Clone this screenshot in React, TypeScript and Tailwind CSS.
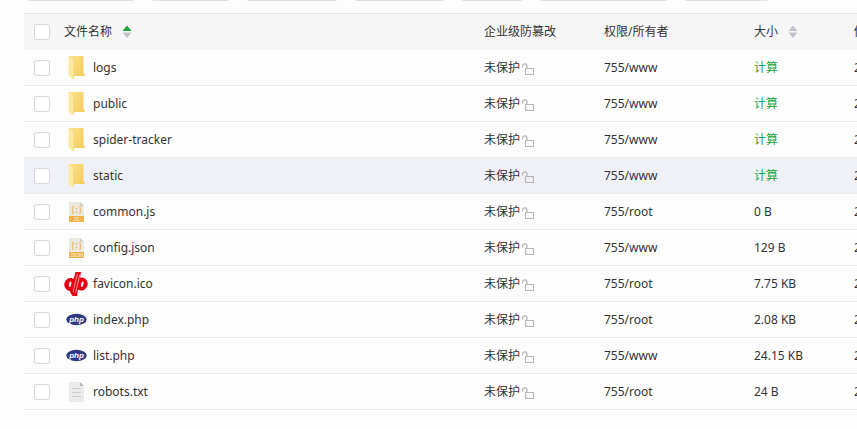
import { ReactNode } from 'react';

type FileKind = 'folder' | 'js' | 'json' | 'ico' | 'php' | 'txt';

type FileRow = {
  name: string;
  kind: FileKind;
  owner: string;
  size?: string;
  active?: boolean;
};

const FILES: FileRow[] = [
  { name: 'logs', kind: 'folder', owner: '755/www' },
  { name: 'public', kind: 'folder', owner: '755/www' },
  { name: 'spider-tracker', kind: 'folder', owner: '755/www' },
  { name: 'static', kind: 'folder', owner: '755/www', active: true },
  { name: 'common.js', kind: 'js', owner: '755/root', size: '0 B' },
  { name: 'config.json', kind: 'json', owner: '755/www', size: '129 B' },
  { name: 'favicon.ico', kind: 'ico', owner: '755/root', size: '7.75 KB' },
  { name: 'index.php', kind: 'php', owner: '755/root', size: '2.08 KB' },
  { name: 'list.php', kind: 'php', owner: '755/www', size: '24.15 KB' },
  { name: 'robots.txt', kind: 'txt', owner: '755/root', size: '24 B' },
];

const TOOLBAR = ['w-[110px]', 'w-[81px]', 'w-[94px]', 'w-[93px]', 'w-[64px]', 'w-[131px]', 'w-[87px]'];

function FolderIcon() {
  return (
    <svg width="24" height="24" viewBox="0 0 24 24" aria-hidden="true">
      <defs>
        <linearGradient id="folder-back" x1="0" y1="0" x2="1" y2="1">
          <stop offset="0" stopColor="#fbe08a" />
          <stop offset="1" stopColor="#f3cb5c" />
        </linearGradient>
      </defs>
      <path d="M5 0H19.5V17.5H20.5V20H5Z" fill="url(#folder-back)" />
      <path d="M4.5 0L9.5 3.5V23.5L4.5 20Z" fill="#fde9a6" />
      <path d="M9.5 4V23" stroke="#f8dc85" strokeWidth="1" />
    </svg>
  );
}

function CodeIcon({ label }: { label: string }) {
  return (
    <svg width="24" height="24" viewBox="0 0 24 24" aria-hidden="true">
      <path d="M5 2H16L20 6V16H5Z" fill="#e9e9df" />
      <path d="M16 2L20 6H16Z" fill="#cfcfc6" />
      <path d="M5 16H20V22H5Z" fill="#f0b04c" />
      <g fill="none" stroke="#f2bd6e" strokeWidth="1.2">
        <path d="M10 6.5H9.5Q8.7 6.5 8.7 7.5V9Q8.7 10 7.5 10Q8.7 10 8.7 11V12.5Q8.7 13.5 9.5 13.5H10" />
        <path d="M15 6.5H15.5Q16.3 6.5 16.3 7.5V9Q16.3 10 17.5 10Q16.3 10 16.3 11V12.5Q16.3 13.5 15.5 13.5H15" />
      </g>
      <path d="M12 7.5H13V9H12ZM12 11H13V12.5H12Z" fill="#f0b457" />
      <text x="12.5" y="21" textAnchor="middle" fontSize="5" fill="#fdf3df" fontFamily="Liberation Sans, sans-serif">
        {label}
      </text>
    </svg>
  );
}

function DpIcon() {
  return (
    <svg width="24" height="24" viewBox="0 0 24 24" aria-hidden="true">
      <g fill="#e60012">
        <ellipse cx="6.5" cy="12.5" rx="6.2" ry="6.5" transform="rotate(10 6.5 12.5)" />
        <ellipse cx="17.5" cy="12" rx="6.2" ry="6.5" transform="rotate(10 17.5 12)" />
        <path d="M11.5 0H17L13 24H8.5L6 20Z" />
      </g>
      <g fill="none" stroke="#fdfdfd">
        <path d="M6.5 10.5L5.8 14" strokeWidth="2" strokeLinecap="round" />
        <path d="M18.6 10.5L17.9 14" strokeWidth="2" strokeLinecap="round" />
        <path d="M13.5 2L9 20" strokeWidth="0.6" />
        <path d="M15.8 3L11.5 21" strokeWidth="0.6" />
      </g>
    </svg>
  );
}

function PhpIcon() {
  return (
    <svg width="24" height="24" viewBox="0 0 24 24" aria-hidden="true">
      <ellipse cx="12.5" cy="11.5" rx="10.2" ry="5.7" fill="#2f3a80" />
      <text
        x="12.5"
        y="14"
        textAnchor="middle"
        fontSize="8"
        fontWeight="bold"
        fontStyle="italic"
        fill="#ffffff"
        fontFamily="Liberation Sans, sans-serif"
      >
        php
      </text>
    </svg>
  );
}

function TextIcon() {
  return (
    <svg width="24" height="24" viewBox="0 0 24 24" aria-hidden="true">
      <path d="M5 2H16L20 6V22H5Z" fill="#ebebeb" />
      <path d="M16 2L20 6H16Z" fill="#b8b8b8" />
      <path d="M8 8.5H17M8 12.5H17M8 16.5H17" stroke="#cfcfcf" />
    </svg>
  );
}

function FileIcon({ kind }: { kind: FileKind }) {
  if (kind === 'folder') return <FolderIcon />;
  if (kind === 'js') return <CodeIcon label="JS" />;
  if (kind === 'json') return <CodeIcon label="JSON" />;
  if (kind === 'ico') return <DpIcon />;
  if (kind === 'php') return <PhpIcon />;
  return <TextIcon />;
}

function UnlockIcon() {
  return (
    <svg width="14" height="14" viewBox="0 0 14 14" fill="none" stroke="#b5b5b5" strokeWidth="1.2" aria-hidden="true">
      <rect x="5.5" y="6.5" width="8" height="6" rx="0.6" />
      <path d="M2.5 5.5V4Q2.5 1.8 4.8 1.8Q7 1.8 7 4V6.5" />
    </svg>
  );
}

function SortIcon({ asc }: { asc?: boolean }) {
  return (
    <svg width="10" height="14" viewBox="0 0 10 14" aria-hidden="true">
      <path d="M5 0.5L9.5 6H0.5Z" fill={asc ? '#20a53a' : '#c0c4cc'} />
      <path d="M5 13L9.5 7.5H0.5Z" fill="#c0c4cc" />
    </svg>
  );
}

function Checkbox({ label }: { label: string }) {
  return (
    <input
      type="checkbox"
      aria-label={label}
      className="block size-4 appearance-none rounded-xs border border-[#d6d7e0] bg-white checked:bg-[#20a53a]"
    />
  );
}

function Th({ children }: { children: ReactNode }) {
  return <th className="px-2.5 text-left font-normal whitespace-nowrap">{children}</th>;
}

export default function App() {
  return (
    <main className="min-h-screen overflow-hidden bg-[#fdfdfd] pl-6 font-['Noto_Sans','Noto_Sans_CJK_SC',sans-serif] text-xs text-[#333]">
      {/* bottom edge of the toolbar buttons scrolled out above the list */}
      <div className="mb-3 flex h-px items-end gap-3.5 overflow-hidden pl-0.5" aria-hidden="true">
        {TOOLBAR.map((width, i) => (
          <span key={i} className={`h-8 shrink-0 rounded border border-[#dcdfe6] ${width}`} />
        ))}
      </div>

      <table className="w-full min-w-[960px] table-fixed border-separate border-spacing-0">
        <colgroup>
          <col className="w-[30px]" />
          <col />
          <col className="w-[120px]" />
          <col className="w-[150px]" />
          <col className="w-[100px]" />
          <col className="w-[140px]" />
        </colgroup>
        <thead>
          <tr className="h-[37px] bg-[#f6f6f6] *:border-t *:border-[#e6e6e6]">
            <th className="pl-2.5">
              <Checkbox label="全选" />
            </th>
            <Th>
              <button type="button" className="flex items-center gap-2.5">
                文件名称
                <SortIcon asc />
              </button>
            </Th>
            <Th>企业级防篡改</Th>
            <Th>权限/所有者</Th>
            <Th>
              <button type="button" className="flex items-center gap-2.5">
                大小
                <SortIcon />
              </button>
            </Th>
            <Th>修</Th>
          </tr>
        </thead>
        <tbody>
          {FILES.map((file) => (
            <tr
              key={file.name}
              className={`h-9 *:border-b *:border-[#ebebeb] hover:bg-[#f0f1f6] ${file.active ? 'bg-[#f0f1f6]' : ''}`}
            >
              <td className="pl-2.5">
                <Checkbox label={file.name} />
              </td>
              <td className="px-2.5">
                <a href="#" className="flex items-center gap-[5px]">
                  <FileIcon kind={file.kind} />
                  {file.name}
                </a>
              </td>
              <td className="px-2.5">
                <span className="flex items-end">
                  未保护
                  <UnlockIcon />
                </span>
              </td>
              <td className="px-2.5">{file.owner}</td>
              <td className="px-2.5">
                {file.size ?? (
                  <button type="button" className="text-[#20a53a]">
                    计算
                  </button>
                )}
              </td>
              <td className="px-2.5">2</td>
            </tr>
          ))}
        </tbody>
      </table>
    </main>
  );
}
